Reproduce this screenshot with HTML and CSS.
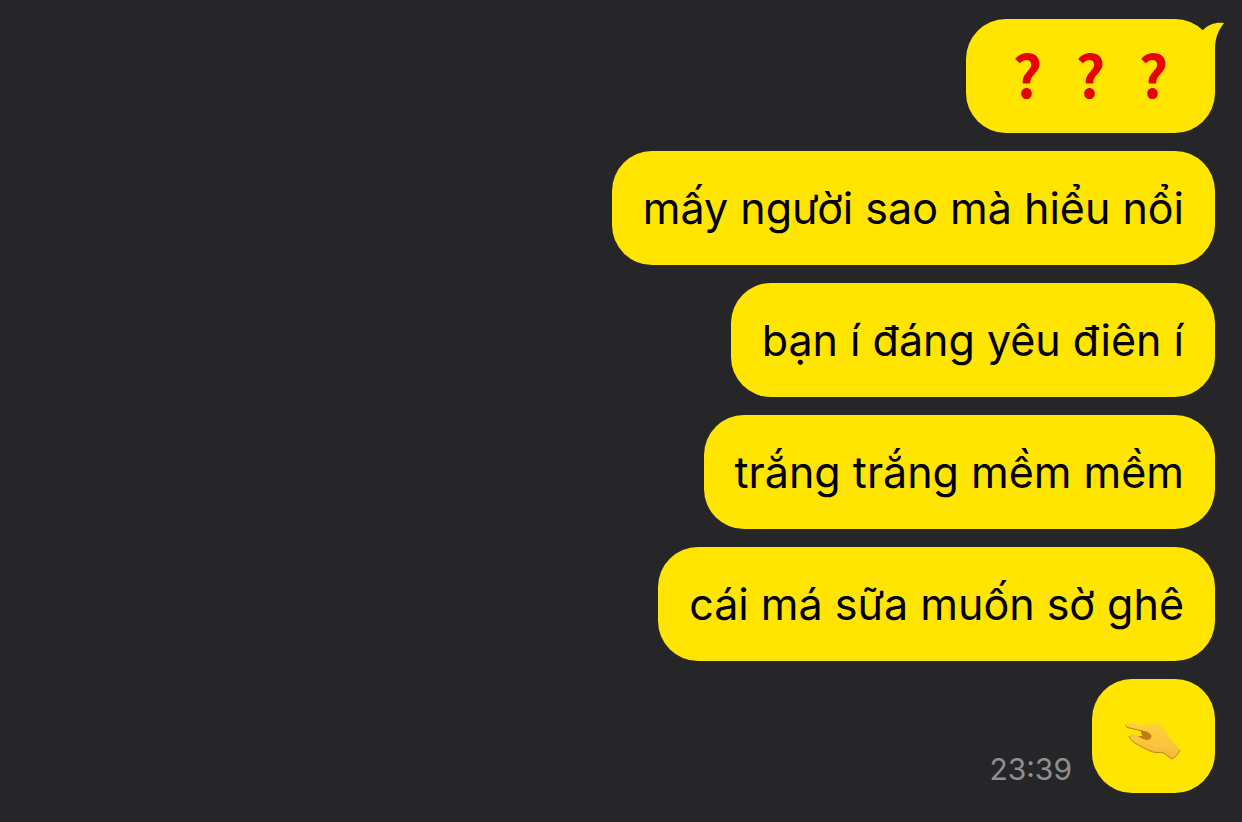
FILE: index.html
```html
<!DOCTYPE html>
<html lang="vi">
<head>
<meta charset="utf-8">
<title>Chat</title>
<link rel="stylesheet" href="styles.css">
</head>
<body>
    <main class="chat">
        <div class="message">
            <div class="bubble first">
                <span class="mark">?</span><span class="mark">?</span><span class="mark">?</span>
                <svg class="tail" width="36" height="50" viewBox="0 0 36 50" aria-hidden="true">
                    <path d="M0 14 L15 11 C21 5 28 3 36 4 C30 12 27 19 27 30 L27 50 L0 50 Z" fill="#ffe500"/>
                </svg>
            </div>
        </div>
        <div class="message">
            <p class="bubble">mấy người sao mà hiểu nổi</p>
        </div>
        <div class="message">
            <p class="bubble">bạn í đáng yêu điên í</p>
        </div>
        <div class="message">
            <p class="bubble">trắng trắng mềm mềm</p>
        </div>
        <div class="message">
            <p class="bubble">cái má sữa muốn sờ ghê</p>
        </div>
        <div class="message">
            <time class="time">23:39</time>
            <div class="bubble">
                <svg class="hand" width="61" height="56" viewBox="0 0 61 56" role="img" aria-label="pinching hand">
                    <defs>
                        <linearGradient id="skin" x1="0.6" y1="0" x2="0.4" y2="1">
                            <stop offset="0" stop-color="#ffd138"/>
                            <stop offset="0.6" stop-color="#fcc43e"/>
                            <stop offset="1" stop-color="#eeae3c"/>
                        </linearGradient>
                    </defs>
                    <path d="M17 21 L29 21 L32 29 L27 35 L17 32 L13 28 L19 28 L18 24 Z" fill="#c17c14"/>
                    <path d="M4 15 C2 16 3 19 6 20 L19 23 C25 24 29 26 28 30 C26 33 22 32 18 30 L11 26 C7 25 6 28 7 31 C11 36 21 41 30 44 C34 45 38 44 41 45 C44 47 46 50 49 51 C52 50 56 45 57 42 L46 29 C43 25 41 19 37 16 C32 14 26 15 20 17 Z" fill="url(#skin)"/>
                    <path d="M3 17 C3 19 4 20 7 20 L19 23 C25 24 28 26 28 29" fill="none" stroke="#b87819" stroke-width="1"/>
                    <path d="M6 28 C7 34 22 41 30 44 C34 45 38 44 41 45 C44 47 46 50 49 51 C52 50 56 45 57 42" fill="none" stroke="#c08428" stroke-width="1"/>
                </svg>
            </div>
        </div>
    </main>
</body>
</html>
```

FILE: styles.css
```css
* {
    box-sizing: border-box;
    margin: 0;
    padding: 0;
}
body {
    background-color: #262628;
    color: black;
    font-family: Inter, "Liberation Sans", sans-serif;
}
.chat {
    display: flex;
    flex-direction: column;
    gap: 18px;
    padding: 19px 27px;
}
.message {
    display: flex;
    justify-content: flex-end;
    align-items: flex-end;
    gap: 20px;
}
.bubble {
    display: flex;
    align-items: center;
    min-height: 114px;
    padding: 0 31px;
    border-radius: 40px;
    background-color: #ffe500;
    font-size: 43px;
    line-height: 54px;
}
.first {
    position: relative;
    padding: 0 30px 6px;
}
.tail {
    position: absolute;
    top: 0;
    right: -9px;
}
.mark {
    width: 63px;
    color: #e60000;
    font-family: "Noto Sans CJK SC", sans-serif;
    font-size: 58px;
    font-weight: 700;
    text-align: center;
}
.time {
    padding-bottom: 6px;
    color: #8e8e93;
    font-size: 30px;
    line-height: 36px;
}
.hand {
    display: block;
}
```
